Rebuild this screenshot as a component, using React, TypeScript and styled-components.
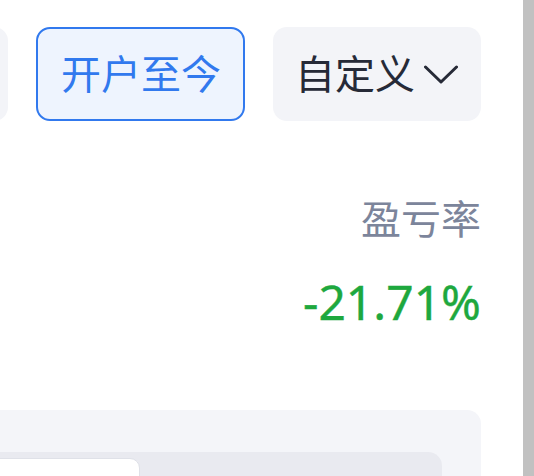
import styled, { createGlobalStyle } from "styled-components";

const GlobalStyle = createGlobalStyle`
  html, body {
    margin: 0;
    padding: 0;
    background: #ffffff;
  }
  body {
    font-family: "Noto Sans", "Noto Sans CJK SC", sans-serif;
  }
`;

export default function App() {
  return (
    <>
      <GlobalStyle />
      <Page>
        <Main>
          <RangeRow>
            {/* previous range option, scrolled out of view on the left */}
            <RangeButton active={false} aria-hidden>
              <Spacer />
            </RangeButton>
            <RangeButton active>开户至今</RangeButton>
            <RangeButton active={false}>
              自定义
              <Chevron viewBox="0 0 34 20" fill="none">
                <path
                  d="M1.5 2 L17 17 L32.5 2"
                  stroke="#262a37"
                  strokeWidth="3"
                  strokeLinecap="round"
                  strokeLinejoin="round"
                />
              </Chevron>
            </RangeButton>
          </RangeRow>

          <Stat>
            <StatLabel>盈亏率</StatLabel>
            <StatValue>-21.71%</StatValue>
          </Stat>

          <Panel>
            <Segments>
              <Segment active />
              <Segment active={false} />
            </Segments>
          </Panel>
        </Main>
        <ScrollThumb />
      </Page>
    </>
  );
}

const Page = styled.div`
  display: flex;
  height: 100vh;
  overflow: hidden;
`;

const Main = styled.div`
  flex: 1;
  min-width: 0;
  display: flex;
  flex-direction: column;
  align-items: flex-end;
  padding: 27px 42px 0 0;
  overflow: hidden;
`;

const ScrollThumb = styled.div`
  width: 11px;
  flex-shrink: 0;
  background: #c1c1c1;
`;

const RangeRow = styled.div`
  display: flex;
  justify-content: flex-end;
  gap: 28px;
  flex-shrink: 0;
`;

const RangeButton = styled.div<{ active: boolean }>`
  flex-shrink: 0;
  height: 94px;
  box-sizing: border-box;
  display: flex;
  align-items: center;
  gap: 9px;
  padding: ${(p) => (p.active ? "0 22px 0 23px" : "0 23px 0 22px")};
  border-radius: 14px;
  border: ${(p) => (p.active ? "2px solid #3179ee" : "none")};
  background: ${(p) => (p.active ? "#eef4fe" : "#f3f4f8")};
  color: ${(p) => (p.active ? "#3179ee" : "#262a37")};
  font-size: 40px;
  line-height: 1;
  white-space: nowrap;
`;

const Spacer = styled.span`
  width: 160px;
`;

const Chevron = styled.svg`
  width: 34px;
  height: 20px;
  margin-top: 2px;
`;

const Stat = styled.div`
  display: flex;
  flex-direction: column;
  align-items: flex-end;
  margin-top: 78px;
`;

const StatLabel = styled.div`
  font-size: 40px;
  line-height: 40px;
  color: #7c859b;
`;

const StatValue = styled.div`
  margin-top: 39px;
  font-size: 48px;
  line-height: 48px;
  color: #1ea83e;
  -webkit-text-stroke: 0.4px #1ea83e;
`;

const Panel = styled.div`
  margin-top: 84px;
  align-self: stretch;
  margin-left: -24px;
  flex: 1;
  background: #f4f5f9;
  border-radius: 14px;
  padding: 42px 39px 0 0;
`;

const Segments = styled.div`
  display: flex;
  height: 60px;
  margin-left: -24px;
  padding: 6px 0 0 0;
  background: #e9eaf0;
  border-radius: 0 14px 0 0;
`;

const Segment = styled.div<{ active: boolean }>`
  flex: ${(p) => (p.active ? "0 0 186px" : "1")};
  background: ${(p) => (p.active ? "#ffffff" : "transparent")};
  border: ${(p) => (p.active ? "1px solid #dfe1e8" : "none")};
  border-radius: 0 10px 0 0;
`;
